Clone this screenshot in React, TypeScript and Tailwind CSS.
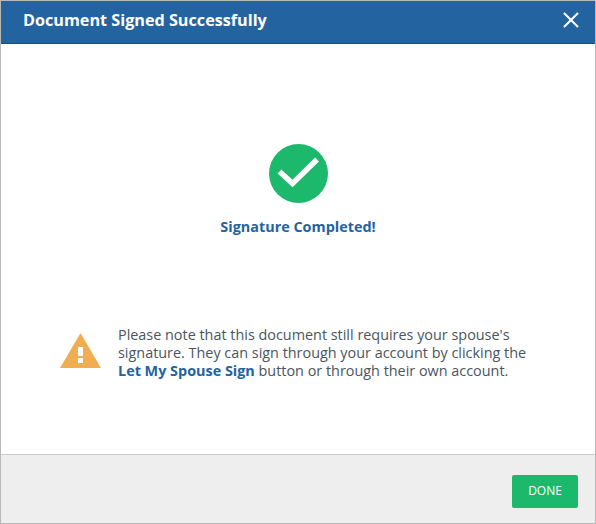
import { X } from 'lucide-react';

export default function App() {
  return (
    <div className="w-[596px] h-[524px] flex flex-col bg-white border border-[#b9b9b9] font-['Open_Sans',sans-serif]">
      <div className="h-[43px] shrink-0 flex items-center justify-between pl-[22px] pr-[11px] pb-1 bg-[#2364a0] border-b border-[#1d4f7e]">
        <h1 className="text-[16.2px] font-bold text-white">Document Signed Successfully</h1>
        <X className="w-[26px] h-[26px] text-white" strokeWidth={1.8} />
      </div>

      <div className="flex-1 flex flex-col items-center">
        <div className="mt-[100px] w-[59px] h-[59px] rounded-full bg-[#1cb96c] flex items-center justify-center">
          <svg width="59" height="59" viewBox="0 0 59 59" fill="none">
            <path d="M10.5 27.5 L23.5 39.5 L48 15.5" stroke="#fff" strokeWidth="5.5" />
          </svg>
        </div>
        <p className="mt-[13px] text-[14.4px] font-bold text-[#2364a0]">Signature Completed!</p>

        <div className="mt-[88px] w-full flex items-center pl-[59px] pr-[62px]">
          <svg width="41" height="35" viewBox="0 0 41 35" className="shrink-0 mb-[5px]">
            <path d="M20.5 0 L41 35 L0 35 Z" fill="#f0ad52" />
            <rect x="18" y="14" width="5" height="9" fill="#fff" />
            <rect x="18" y="25" width="5" height="5" fill="#fff" />
          </svg>
          <p className="ml-[17px] text-[14.4px] leading-[18px] text-[#4a5560]">
            Please note that this document still requires your spouse's signature. They can sign through your account by clicking the <span className="font-bold text-[#2364a0]">Let My Spouse Sign</span> button or through their own account.
          </p>
        </div>
      </div>

      <div className="h-[69px] shrink-0 flex items-center justify-end pt-[4px] pr-[17px] bg-[#eeeeee] border-t border-[#cccccc]">
        <button className="w-[66px] h-[33px] rounded-[2px] bg-[#1cb96c] text-xs text-white">DONE</button>
      </div>
    </div>
  );
}
